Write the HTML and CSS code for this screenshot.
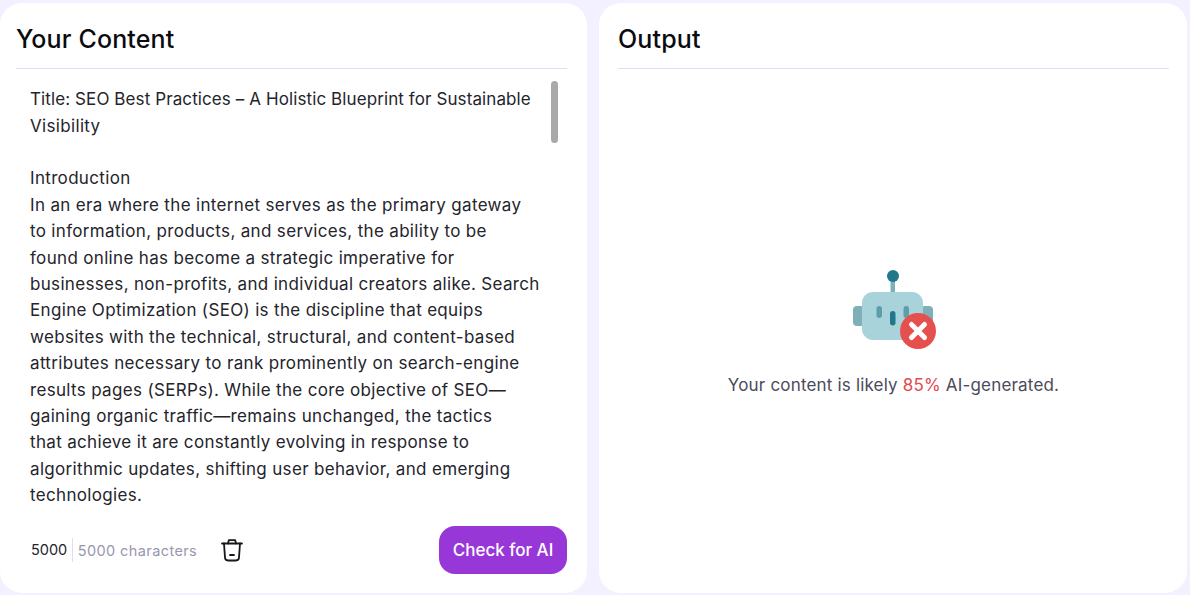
FILE: index.html
```html
<!DOCTYPE html>
<html lang="en">
<head>
<meta charset="utf-8">
<title>AI Content Checker</title>
<link rel="stylesheet" href="styles.css">
</head>
<body>
<main class="layout">
  <section class="panel panel-input">
    <h2 class="title">Your Content</h2>
    <div class="content">
      <div class="scroll-text"><span class="first-line">Title: SEO Best Practices – A Holistic Blueprint for Sustainable</span><br>Visibility<br><br>Introduction<br>In an era where the internet serves as the primary gateway<br>to information, products, and services, the ability to be<br>found online has become a strategic imperative for<br>businesses, non-profits, and individual creators alike. Search<br>Engine Optimization (SEO) is the discipline that equips<br>websites with the technical, structural, and content-based<br>attributes necessary to rank prominently on search-engine<br>results pages (SERPs). While the core objective of SEO—<br>gaining organic traffic—remains unchanged, the tactics<br>that achieve it are constantly evolving in response to<br>algorithmic updates, shifting user behavior, and emerging<br>technologies.</div>
      <div class="scroll-thumb"></div>
    </div>
    <div class="footer">
      <div class="counter">
        <span class="count">5000</span>
        <span class="limit">5000 characters</span>
      </div>
      <svg class="trash" width="24" height="24" viewBox="0 0 24 24" fill="none" stroke="#17171c" stroke-width="1.8" stroke-linecap="round" stroke-linejoin="round">
        <path d="M2 5.500h20"/>
        <path d="M8 5.500 8.800 2.200h6.400L16 5.500"/>
        <path d="M4 5.500 5 19.500Q5.200 22.500 8 22.500h8Q18.800 22.500 19 19.500L20 5.500"/>
        <path d="M10 17h4"/>
      </svg>
      <button class="check" type="button">Check for AI</button>
    </div>
  </section>
  <section class="panel panel-output">
    <h2 class="title">Output</h2>
    <div class="result">
      <svg class="robot" width="84" height="82" viewBox="0 0 84 82">
        <rect x="37.500" y="8" width="4.500" height="18" fill="#7fb0b8"/>
        <circle cx="40" cy="6" r="6" fill="#21788a"/>
        <rect x="0" y="36" width="12" height="20" rx="4" fill="#7fb0b8"/>
        <rect x="68" y="36" width="12" height="20" rx="4" fill="#7fb0b8"/>
        <rect x="9" y="22" width="61" height="48" rx="11" fill="#a8d3db"/>
        <rect x="23.500" y="36" width="5.500" height="12" rx="2.700" fill="#5f9ea8"/>
        <rect x="37" y="41" width="5.500" height="14.500" rx="2.700" fill="#21788a"/>
        <rect x="50.500" y="36" width="5.500" height="12" rx="2.700" fill="#5f9ea8"/>
        <circle cx="65" cy="61" r="18" fill="#e5504f"/>
        <path d="M58.500 54.500 71.500 67.500M71.500 54.500 58.500 67.500" stroke="#fff" stroke-width="5" stroke-linecap="round"/>
      </svg>
      <p class="verdict">Your content is likely <span class="score">85%</span> AI-generated.</p>
    </div>
  </section>
</main>
</body>
</html>
```
FILE: styles.css
```css
* { box-sizing: border-box; }
html, body { margin: 0; height: 100%; }
body {
  background: #f3f0ff;
  font-family: Inter, "Liberation Sans", sans-serif;
  overflow: hidden;
}
.layout {
  display: grid;
  grid-template-columns: 587px 588px;
  gap: 12px;
  height: 595px;
  padding: 3px 0 2px;
}
.panel {
  background: #fff;
  border-radius: 22px;
  display: flex;
  flex-direction: column;
  min-height: 0;
}
.panel-input { padding: 0 20px 0 16px; }
.panel-output { padding: 0 18px 0 19px; }
.title {
  margin: 0;
  height: 66px;
  padding-top: 18px;
  line-height: 36px;
  font-size: 25px;
  font-weight: 500;
  letter-spacing: 0.15px;
  color: #0b0b0f;
  border-bottom: 1px solid #e2dcf8;
}
.content {
  display: flex;
  justify-content: space-between;
  flex: 1;
  min-height: 0;
  padding: 17.2px 9px 0 14px;
}
.scroll-text {
  font-size: 17px;
  line-height: 26.4px;
  letter-spacing: 0.33px;
  color: #24242c;
  white-space: nowrap;
}
.first-line { letter-spacing: 0.1px; }
.scroll-thumb {
  width: 7px;
  height: 62px;
  margin-top: -5.2px;
  background: #a9a9a9;
  border-radius: 4px;
}
.footer {
  display: flex;
  align-items: center;
  height: 48px;
  margin: 0 0 19px;
  padding-left: 15px;
}
.counter {
  display: flex;
  align-items: center;
  height: 24px;
  font-size: 14.500px;
}
.count {
  color: #24242c;
  padding-right: 5px;
  border-right: 1px solid #e2dcf8;
  line-height: 24px;
}
.limit {
  color: #9a96ad;
  padding-left: 4.500px;
  letter-spacing: 0.4px;
}
.trash { margin-left: 23px; }
.check {
  margin-left: auto;
  width: 128px;
  height: 48px;
  border: 0;
  border-radius: 16px;
  background: #9837d8;
  color: #fff;
  font-family: inherit;
  font-size: 17px;
  font-weight: 500;
}
.result {
  flex: 1;
  display: flex;
  flex-direction: column;
  align-items: center;
  padding-top: 201px;
}
.robot { margin-left: 3px; }
.verdict {
  margin: 21px 0 0;
  font-size: 17px;
  line-height: 24px;
  letter-spacing: 0.18px;
  color: #4c4a5c;
}
.score { color: #e5484d; }
```
